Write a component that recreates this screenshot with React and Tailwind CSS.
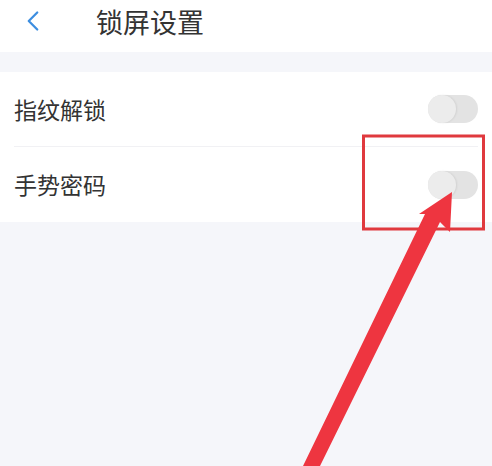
import { ChevronLeft } from 'lucide-react';

function Toggle() {
  return (
    <div className="relative w-[50px] h-[28px] rounded-full bg-[#e3e3e3]">
      <div className="absolute left-0 top-0 w-[28px] h-[28px] rounded-full bg-[#ececec] shadow-[1px_0_2px_rgba(0,0,0,0.08)]" />
    </div>
  );
}

function Row({ label, divider }) {
  return (
    <div className="px-[14px]">
      <div className={'flex items-center justify-between h-[75px]' + (divider ? ' border-b border-[#f1f1f4]' : '')}>
        <span className="text-[23px] text-[#333]">{label}</span>
        <Toggle />
      </div>
    </div>
  );
}

export default function App() {
  return (
    <div
      className="relative w-[492px] h-[466px] overflow-hidden bg-[#f5f6fa]"
      style={{ fontFamily: '"Noto Sans CJK SC", "Noto Sans", sans-serif' }}
    >
      <div className="flex items-center h-[52px] pb-[10px] bg-white">
        <ChevronLeft className="ml-[16px] text-[#3d8ee0]" size={34} strokeWidth={1.6} />
        <span className="ml-[46px] text-[27px] text-[#333] leading-none">锁屏设置</span>
      </div>
      <div className="h-[20px]" />
      <div className="bg-white">
        <Row label="指纹解锁" divider />
        <Row label="手势密码" />
      </div>

      {/* annotation overlay */}
      <svg className="absolute inset-0 pointer-events-none" width="492" height="466" viewBox="0 0 492 466">
        <rect x="363.5" y="136" width="120" height="93" fill="none" stroke="#e0393e" strokeWidth="3" />
        <polygon
          points="452,192 450,232 440,222 320,466 303,466 425,214 419,214"
          fill="#ee3540"
        />
      </svg>
    </div>
  );
}
